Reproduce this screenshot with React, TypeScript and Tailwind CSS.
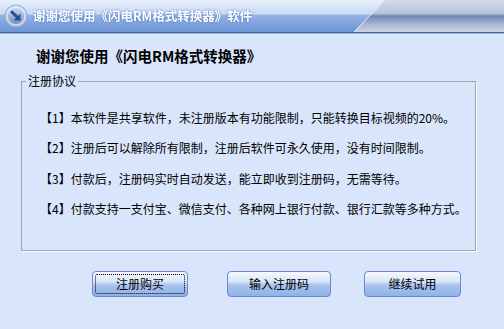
import React from "react";

const font = { fontFamily: '"Noto Sans CJK SC", "Noto Sans", sans-serif' };

function TitleIcon() {
  return (
    <svg width="24" height="24" viewBox="0 0 24 24" className="shrink-0">
      <defs>
        <radialGradient id="ring" cx="50%" cy="35%" r="65%">
          <stop offset="0%" stopColor="#ffffff" />
          <stop offset="100%" stopColor="#b9c8e2" />
        </radialGradient>
        <linearGradient id="core" x1="0" y1="0" x2="0" y2="1">
          <stop offset="0%" stopColor="#c9d8ef" />
          <stop offset="100%" stopColor="#6f8fc6" />
        </linearGradient>
      </defs>
      <circle cx="12" cy="12" r="11" fill="url(#ring)" stroke="#8ea6cf" strokeWidth="1" />
      <circle cx="12" cy="12" r="8" fill="url(#core)" />
      <path d="M8 8 L14.5 14.5" stroke="#1f4f8f" strokeWidth="3" strokeLinecap="round" />
      <path d="M9.5 16.5 L16.5 16.5 L16.5 9.5 Z" fill="#1f4f8f" />
    </svg>
  );
}

function Btn({ label, w, focus }: { label: string; w: string; focus?: boolean }) {
  return (
    <button
      className={`relative h-[26px] ${w} rounded-[4px] border border-[#6d88cf] bg-[linear-gradient(to_bottom,#f7f9fe_0%,#d9e5f8_40%,#a9c3ee_55%,#8eb2e8_100%)] text-[12px] text-black leading-none`}
      style={font}
    >
      {focus && (
        <span className="pointer-events-none absolute inset-[2px] rounded-[2px] border border-dotted border-black" />
      )}
      {label}
    </button>
  );
}

export default function App() {
  const lines = [
    "【1】本软件是共享软件，未注册版本有功能限制，只能转换目标视频的20%。",
    "【2】注册后可以解除所有限制，注册后软件可永久使用，没有时间限制。",
    "【3】付款后，注册码实时自动发送，能立即收到注册码，无需等待。",
    "【4】付款支持一支付宝、微信支付、各种网上银行付款、银行汇款等多种方式。",
  ];
  return (
    <div className="w-[504px] h-[329px] bg-[#d9e5fb] overflow-hidden flex flex-col" style={font}>
      {/* title bar */}
      <div className="relative h-[32px] shrink-0 bg-[linear-gradient(to_bottom,#e8effc_0%,#c9daf4_44%,#93b3e5_47%,#6c95d6_100%)] flex items-center pl-[4px] gap-[5px]">
        <TitleIcon />
        <span className="text-white font-bold text-[12.5px] leading-none drop-shadow-[0_0_1px_#4a74b8]">
          谢谢您使用《闪电RM格式转换器》软件
        </span>
        <svg className="absolute right-0 top-0" width="150" height="32" viewBox="0 0 150 32" preserveAspectRatio="none">
          <defs>
            <linearGradient id="gr" x1="0" y1="0" x2="0" y2="1">
              <stop offset="0%" stopColor="#d3dbe9" />
              <stop offset="42%" stopColor="#b6c3da" />
              <stop offset="50%" stopColor="#6d87b6" />
              <stop offset="75%" stopColor="#a5b5d0" />
              <stop offset="100%" stopColor="#ccd5e4" />
            </linearGradient>
          </defs>
          <polygon points="31,0 150,0 150,32 0,32" fill="url(#gr)" />
          <line x1="31" y1="0" x2="0" y2="32" stroke="#e8eef8" strokeWidth="1" />
        </svg>
      </div>
      <div className="h-[2px] shrink-0 bg-[#3e5f9e] border-b border-[#9fb7e2]" />

      {/* heading */}
      <div className="pl-[36px] mt-[12px] h-[20px] flex items-center text-[14.5px] font-bold text-black leading-none">
        谢谢您使用《闪电RM格式转换器》
      </div>

      {/* group box */}
      <div className="relative ml-[21px] mt-[15px] w-[455px] h-[170px] border border-[#a3a3a3] shadow-[1px_1px_0_#ffffff]">
        <span className="absolute left-[4px] -top-[8px] px-[2px] bg-[#d9e5fb] text-[12px] leading-[14px] text-black">
          注册协议
        </span>
        <div className="pl-[18px] pt-[21px] flex flex-col">
          {lines.map((l) => (
            <div key={l} className="h-[30.4px] leading-[30px] text-[12px] text-black whitespace-nowrap">
              {l}
            </div>
          ))}
        </div>
      </div>

      {/* buttons */}
      <div className="flex mt-[19px]">
        <div className="ml-[92px]">
          <Btn label="注册购买" w="w-[96px]" focus />
        </div>
        <div className="ml-[39px]">
          <Btn label="输入注册码" w="w-[104px]" />
        </div>
        <div className="ml-[33px]">
          <Btn label="继续试用" w="w-[97px]" />
        </div>
      </div>
    </div>
  );
}
